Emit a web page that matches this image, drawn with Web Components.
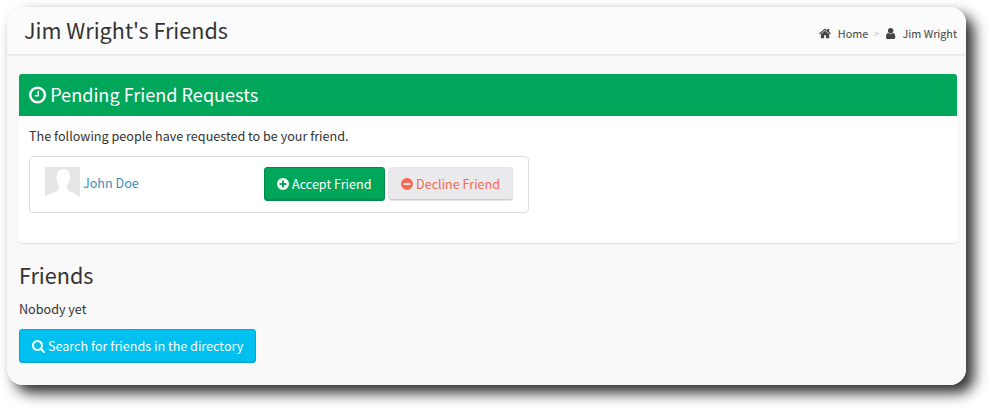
<!DOCTYPE html>
<html lang="en">
<head>
<meta charset="utf-8">
<title>Jim Wright's Friends</title>
<style>
html{background:#fff}
body{margin:0;height:408px;overflow:hidden;font-family:"Noto Sans CJK SC","Noto Sans CJK JP",sans-serif;font-size:12.6px;line-height:20px;color:#333}
</style>
</head>
<body>
<friends-page>
  <page-header slot="header">Jim Wright's Friends
    <bread-crumb slot="crumbs">
      <fa-icon name="home"></fa-icon><span>Home</span><i>&gt;</i><fa-icon name="user"></fa-icon><span>Jim Wright</span>
    </bread-crumb>
  </page-header>
  <request-box>
    <fa-icon slot="title" name="clock"></fa-icon><span slot="title">Pending Friend Requests</span>
    <span slot="intro">The following people have requested to be your friend.</span>
    <friend-row>John Doe
      <action-button slot="actions" kind="success" icon="plus" style="width:121px">Accept Friend</action-button>
      <action-button slot="actions" kind="plain" icon="minus" style="width:125px">Decline Friend</action-button>
    </friend-row>
  </request-box>
  <friend-list>Friends
    <span slot="empty">Nobody yet</span>
    <action-button slot="action" kind="info" icon="search" style="width:237px">Search for friends in the directory</action-button>
  </friend-list>
</friends-page>
<script>
const define = (name, html, setup) => customElements.define(name, class extends HTMLElement {
  constructor() {
    super();
    const t = document.createElement('template');
    t.innerHTML = html;
    this.attachShadow({mode: 'open'}).append(t.content.cloneNode(true));
  }
  connectedCallback() { if (setup) setup(this, this.shadowRoot); }
});

const icons = {
  home: [1664, 'M1408 992v480q0 26-19 45t-45 19H960v-384H704v384H320q-26 0-45-19t-19-45V992q0-1 .5-3t.5-3l575-474 575 474q1 2 1 6zm223-69l-62 74q-8 9-21 11h-3q-13 0-21-7L832 424 140 1001q-12 8-24 7-13-2-21-11l-62-74q-8-10-7-23.5T37 878L756 279q32-26 76-26t76 26l244 204V288q0-14 9-23t23-9h192q14 0 23 9t9 23v408l219 182q10 8 11 21.5t-7 23.5z'],
  user: [1280, 'M1280 1399q0 109-62.5 187t-150.5 78H213q-88 0-150.5-78T0 1399q0-85 8.5-160.5t31.5-152 58.5-131 94-89T327 832q131 128 313 128t313-128q76 0 134.5 34.5t94 89 58.5 131 31.5 152 8.5 160.5zm-256-887q0 159-112.5 271.5T640 896 368.5 783.5 256 512t112.5-271.5T640 128t271.5 112.5T1024 512z'],
  clock: [1536, 'M896 544v448q0 14-9 23t-23 9H544q-14 0-23-9t-9-23v-64q0-14 9-23t23-9h224V544q0-14 9-23t23-9h64q14 0 23 9t9 23zm416 352q0-148-73-273t-198-198-273-73-273 73-198 198-73 273 73 273 198 198 273 73 273-73 198-198 73-273zm224 0A768 768 0 1 1 0 896A768 768 0 1 1 1536 896z'],
  plus: [1536, 'M1216 960V832q0-26-19-45t-45-19H896V512q0-26-19-45t-45-19H704q-26 0-45 19t-19 45v256H384q-26 0-45 19t-19 45v128q0 26 19 45t45 19h256v256q0 26 19 45t45 19h128q26 0 45-19t19-45v-256h256q26 0 45-19t19-45zm320-64A768 768 0 1 1 0 896A768 768 0 1 1 1536 896z'],
  minus: [1536, 'M1216 960V832q0-26-19-45t-45-19H384q-26 0-45 19t-19 45v128q0 26 19 45t45 19h768q26 0 45-19t19-45zm320-64A768 768 0 1 1 0 896A768 768 0 1 1 1536 896z'],
  search: [1664, 'M1152 832q0-185-131.5-316.5T704 384 387.5 515.5 256 832t131.5 316.5T704 1280t316.5-131.5T1152 832zm512 832q0 52-38 90t-90 38q-54 0-90-38l-343-342q-179 124-399 124-143 0-273.5-55.5t-225-150-150-225T0 832t55.5-273.5 150-225 225-150T704 128t273.5 55.5 225 150 150 225T1408 832q0 220-124 399l343 343q37 37 37 90z']
};
define('fa-icon', `<style>:host{display:inline-flex;flex:none;height:var(--icon,14px)}svg{display:block;height:100%;fill:currentColor;overflow:visible}</style><svg><path fill-rule="evenodd"/></svg>`, (el, root) => {
  const [w, d] = icons[el.getAttribute('name')];
  root.querySelector('svg').setAttribute('viewBox', `0 0 ${w} 1792`);
  root.querySelector('path').setAttribute('d', d);
});

define('friends-page', `<style>
:host{display:block;padding:7px 23px 23px 7px}
.card{height:378px;border-radius:16px;overflow:hidden;background:#f9f9f9}
.frame{border-radius:16px;box-shadow:8px 8px 14px rgba(0,0,0,.82),0 0 3px rgba(0,0,0,.04)}
.content{padding:19px 9px 0 12px}
</style><div class="frame"><div class="card"><slot name="header"></slot><div class="content"><slot></slot></div></div></div>`);

define('page-header', `<style>
:host{display:flex;justify-content:space-between;box-sizing:border-box;height:48px;padding:0 9px 0 17px;background:#fbfbfb;box-shadow:0 1px 1px rgba(0,0,0,.04);border-bottom:1px solid #e8e8e8}
h1{margin:0;font-size:21.6px;line-height:46px;font-weight:400;white-space:nowrap}
</style><h1><slot></slot></h1><slot name="crumbs"></slot>`);

define('bread-crumb', `<style>
:host{display:flex;align-items:center;height:20px;margin-top:16px;font-size:10.8px;color:#444;--icon:13px}
::slotted(span){margin-left:7px;white-space:nowrap}
::slotted(i){font-style:normal;font-size:10.8px;color:#ccc;margin:0 7px 0 5px}
</style><slot></slot>`);

define('request-box', `<style>
:host{display:block;height:169px;background:#fff;border-radius:3px;box-shadow:0 1px 1px rgba(0,0,0,.1)}
header{display:flex;align-items:center;gap:4px;height:42px;padding-left:10px;background:#00a65a;color:#fff;border-radius:3px 3px 0 0;font-size:18.1px;--icon:20px}
header ::slotted(span){margin-top:-2px}
.body{padding:10px}
.intro{margin-bottom:10px}
</style><header><slot name="title"></slot></header><div class="body"><div class="intro"><slot name="intro"></slot></div><slot></slot></div>`);

define('user-avatar', `<style>:host{display:block;width:35px;height:35px}svg{display:block}</style>
<svg width="35" height="35" viewBox="0 0 35 35"><path fill="#e5e5e5" d="M0 0h35v30.500Q32 26.500 24 24Q22 23 22 19.500V18Q24 17 24.500 13.500Q26 11 25 9.500Q25 2 18.500 2Q12 2 12 9Q10.500 11 12 14Q12 17 14 18.500V20Q14 23 12 24Q4 26.500 0 29.500z"/></svg>`);

define('friend-row', `<style>
:host{display:flex;box-sizing:border-box;width:500px;height:57px;padding:10px 15px;border:1px solid #ddd;border-radius:4px}
.who{display:flex;gap:3px;width:219px}
a{margin-top:6px;color:#3c8dbc;white-space:nowrap}
.actions{display:flex;gap:3px}
</style><div class="who"><user-avatar></user-avatar><a><slot></slot></a></div><div class="actions"><slot name="actions"></slot></div>`);

define('action-button', `<style>
:host{display:block;--icon:14px}
button{display:flex;align-items:center;gap:3px;box-sizing:border-box;width:100%;height:34px;padding:0 0 0 12px;border:1px solid;border-radius:3px;font:inherit;white-space:nowrap;color:#fff}
:host([kind=success]) button{background:#00a65a;border-color:#008d4c;box-shadow:inset 0 -2px 0 rgba(0,0,0,.09)}
:host([kind=plain]) button{background:#eaeaec;border-color:#e6e6e8;color:#f56954;box-shadow:inset 0 -1px 0 rgba(0,0,0,.12)}
:host([kind=info]) button{background:#00c0ef;border-color:#00acd6;box-shadow:inset 0 -1px 0 rgba(0,0,0,.09)}
</style><button><fa-icon name="plus"></fa-icon><span><slot></slot></span></button>`, (el, root) => {
  const icon = document.createElement('fa-icon');
  icon.setAttribute('name', el.getAttribute('icon'));
  root.querySelector('fa-icon').replaceWith(icon);
});

define('friend-list', `<style>
:host{display:block}
h2{margin:19px 0 0;font-size:21.6px;line-height:26px;font-weight:400}
p{margin:11px 0 10px}
</style><h2><slot></slot></h2><p><slot name="empty"></slot></p><slot name="action"></slot>`);
</script>
</body>
</html>
